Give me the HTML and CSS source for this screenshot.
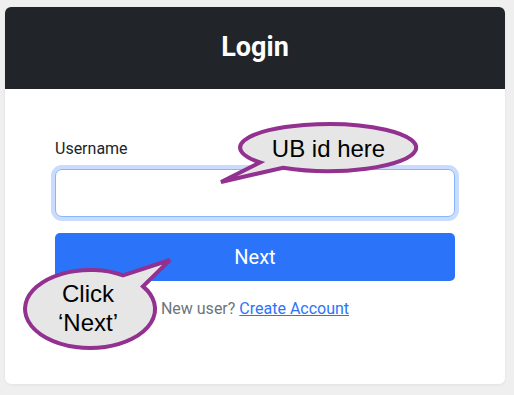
FILE: index.html
```html
<!DOCTYPE html>
<html>
<head>
<meta charset="utf-8">
<link rel="stylesheet" href="styles.css">
</head>
<body>
<div class="page">
  <div class="card">
    <div class="card-header"><h3 class="title">Login</h3></div>
    <div class="card-body">
      <label class="form-label" for="u">Username</label>
      <input id="u" class="form-control" type="text">
      <button class="btn">Next</button>
      <p class="signup">New user? <a href="#">Create Account</a></p>
    </div>
  </div>
  <svg class="overlay" viewBox="0 0 514 395" width="514" height="395">
    <path class="bubble" d="M 260 162.4 L 221 182 L 283 167.7 A 88 23.5 0 1 0 260 162.4 Z"/>
    <text class="bubble-text" x="328.5" y="157">UB id here</text>
    <path class="bubble" d="M 123 275.4 L 170 260 L 143 286.4 A 65 39 0 1 1 123 275.4 Z"/>
    <text class="bubble-text" x="88" y="302">Click</text>
    <text class="bubble-text" x="88" y="331">‘Next’</text>
  </svg>
</div>
</body>
</html>
```
FILE: styles.css
```css
* { box-sizing: border-box; }
html, body { margin: 0; padding: 0; }
body {
  background: #efefef;
  font-family: Roboto, "Liberation Sans", sans-serif;
  width: 514px;
  height: 395px;
  overflow: hidden;
}
.page {
  position: relative;
  padding: 7px 9px 0 5px;
  height: 395px;
}
.card {
  background: #fff;
  border-radius: 6px;
  overflow: hidden;
  height: 377px;
  box-shadow: 0 1px 3px rgba(0,0,0,0.06);
}
.card-header {
  background: #212529;
  height: 82px;
  display: flex;
  align-items: center;
  justify-content: center;
}
.title {
  margin: 0;
  color: #fff;
  font-weight: 700;
  font-size: 27px;
  line-height: 1.2;
  padding-bottom: 2px;
}
.card-body {
  padding: 48px 50px 0 50px;
  display: flex;
  flex-direction: column;
}
.form-label {
  font-size: 16px;
  line-height: 24px;
  color: #212529;
  margin-bottom: 8px;
}
.form-control {
  height: 48px;
  width: 100%;
  border: 1px solid #86b7fe;
  border-radius: 7px;
  box-shadow: 0 0 0 4px #c9dcfd;
  outline: none;
  font-size: 20px;
  padding: 8px 16px;
  margin: 0;
}
.btn {
  margin-top: 16px;
  height: 48px;
  width: 100%;
  background: #2b74fa;
  border: none;
  border-radius: 5px;
  color: #fff;
  font-family: Roboto, "Liberation Sans", sans-serif;
  font-size: 20px;
  line-height: 30px;
  padding: 0;
}
.signup {
  margin: 16px 0 0;
  text-align: center;
  font-size: 16px;
  line-height: 24px;
  color: #6c757d;
}
.signup a { color: #2b74fa; text-decoration: underline; }
.overlay {
  position: absolute;
  left: 0;
  top: 0;
  pointer-events: none;
}
.bubble {
  fill: #e6e6e6;
  stroke: #92318f;
  stroke-width: 4;
  stroke-linejoin: miter;
}
.bubble-text {
  font-family: "Liberation Sans", Arial, sans-serif;
  font-size: 24px;
  fill: #000;
  text-anchor: middle;
}
```
